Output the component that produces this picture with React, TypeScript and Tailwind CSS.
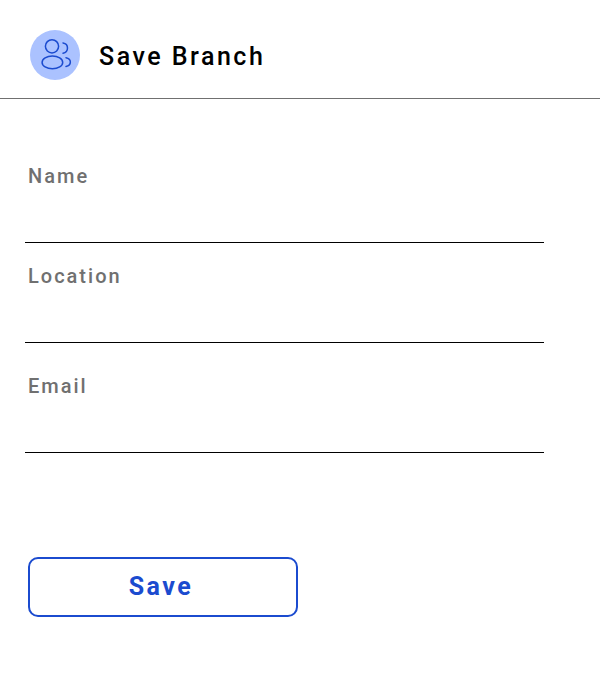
const fields = [
  { label: "Name", box: "h-[100px]" },
  { label: "Location", box: "h-[100px]" },
  { label: "Email", box: "mt-[10px] h-[100px]" },
];

function UsersIcon() {
  return (
    <svg width="50" height="50" viewBox="0 0 50 50" fill="none" stroke="#1b4bcf" strokeWidth="1.5" strokeLinecap="round" aria-hidden="true">
      <circle cx="22" cy="16.3" r="6.6" />
      <ellipse cx="22.400" cy="32.400" rx="10.300" ry="6.400" />
      <path d="M33 12.900a5.200 5.200 0 0 1 0 10.300" />
      <path d="M36 27.700c5.800 1 5.800 7.700 0 8.700" />
    </svg>
  );
}

export default function App() {
  return (
    <main className="h-[686px] w-[600px] bg-white font-[Roboto,sans-serif]">
      <header className="flex h-[99px] items-start border-b border-[#707070] pl-[30px] pt-[30px]">
        <div className="size-[50px] rounded-full bg-[#abc2ff]">
          <UsersIcon />
        </div>
        <h1 className="ml-[19px] mt-[10px] text-[25px] font-medium leading-[34px] tracking-[2.5px] text-black">Save Branch</h1>
      </header>
      <form className="pl-[25px] pt-[44px]">
        {fields.map((field) => (
          <div key={field.label} className={`${field.box} flex w-[519px] flex-col border-b border-black pl-[3px] pt-[20px]`}>
            <label className="text-[20px] font-medium leading-[26px] tracking-[2px] text-[#707070]">{field.label}</label>
          </div>
        ))}
        <button type="button" className="ml-[3px] mt-[104px] flex h-[60px] w-[270px] items-center justify-center rounded-[10px] border-2 border-[#1b4bcf] pr-[4px] text-[25px] font-bold leading-[36px] tracking-[2.5px] text-[#1b4bcf]">
          Save
        </button>
      </form>
    </main>
  );
}
